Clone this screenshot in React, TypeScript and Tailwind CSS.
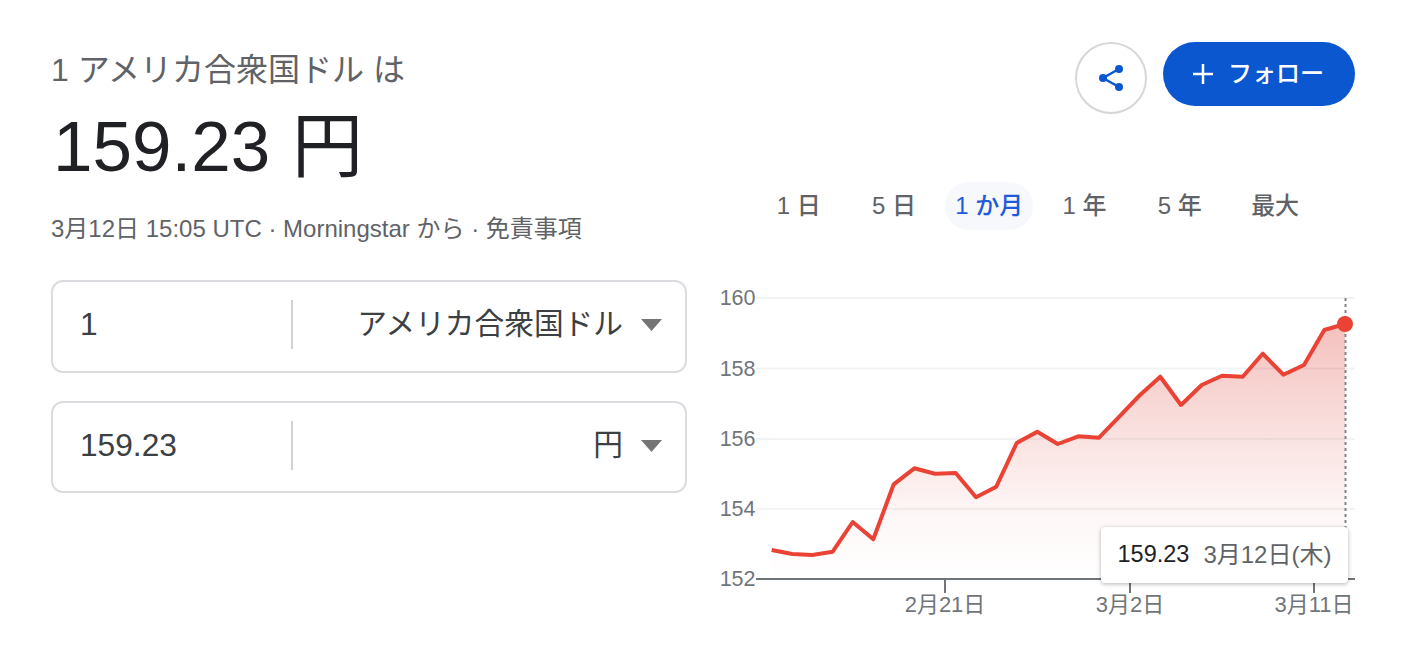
const FONT = "font-['Liberation_Sans','Noto_Sans_CJK_JP',sans-serif]";

const pts = "771.7,550 792.3,554 812.3,555 832.7,551.7 852.7,522 873.3,539.3 893.7,484.3 914.3,468.3 935,473.7 955.7,473 976,497.3 996.3,486.7 1016.7,443 1037.3,431.7 1057.7,444 1078.3,436.3 1099,437.7 1119.3,416.7 1140,395 1160.3,376.7 1181,405 1201.7,385 1222,375.7 1242.7,376.7 1262.7,353.7 1283.3,374.7 1304,365 1324.3,330 1345,324";

function Converter({ value, unit, short }: { value: string; unit: string; short?: boolean }) {
  return (
    <div
      className={
        short
          ? "flex h-[92px] w-[636px] items-center rounded-[12px] border-2 border-[#dadce0] bg-white pb-[3px]"
          : "flex h-[93px] w-[636px] items-center rounded-[12px] border-2 border-[#dadce0] bg-white pb-[4px]"
      }
    >
      <div className="w-[238px] shrink-0 pl-[27px] text-[31.7px] text-[#3c4043]">{value}</div>
      <div className="h-[49px] w-[2px] shrink-0 bg-[#cfd1d4]" />
      <div className="flex flex-1 items-center justify-end pr-[23px]">
        <span className="text-[29.7px] text-[#3c4043]">{unit}</span>
        <svg width="21" height="12" viewBox="0 0 21 12" className="ml-[18px] mt-[2px]">
          <path d="M0 0H21L10.5 12Z" fill="#757575" />
        </svg>
      </div>
    </div>
  );
}

function Tab({ label, active }: { label: string; active?: boolean }) {
  return (
    <div className="flex h-[48px] w-[95.3px] items-center justify-center">
      <span
        className={
          active
            ? "flex h-[48px] w-[88px] items-center justify-center rounded-full bg-[#f6f8fb] text-[24px] font-medium text-[#1f5bd8]"
            : "text-[24px] font-medium text-[#5f6368]"
        }
      >
        {label}
      </span>
    </div>
  );
}

function Chart() {
  const labels = [
    ["160", 298],
    ["158", 368.5],
    ["156", 439],
    ["154", 509],
    ["152", 579],
  ] as const;
  return (
    <div className="relative h-[340px] w-[650px]">
      <svg width="650" height="340" viewBox="712 280 650 340" className="block">
        <defs>
          <linearGradient id="fill" gradientUnits="userSpaceOnUse" x1="0" y1="324" x2="0" y2="579">
            <stop offset="0" stopColor="#d93025" stopOpacity="0.3" />
            <stop offset="0.5" stopColor="#d93025" stopOpacity="0.12" />
            <stop offset="0.75" stopColor="#d93025" stopOpacity="0.04" />
            <stop offset="1" stopColor="#d93025" stopOpacity="0" />
          </linearGradient>
        </defs>
        {[298, 368.5, 439, 509].map((y) => (
          <line key={y} x1="756" x2="1355" y1={y} y2={y} stroke="#f1f3f4" strokeWidth="2" />
        ))}
        <polygon points={`771.7,579 ${pts} 1345,579`} fill="url(#fill)" />
        <line x1="1345.5" x2="1345.5" y1="298" y2="530" stroke="#80868b" strokeWidth="2" strokeDasharray="3 3" />
        <polyline points={pts} fill="none" stroke="#ea4335" strokeWidth="4" strokeLinejoin="round" />
        <circle cx="1345" cy="324" r="8" fill="#ea4335" />
        <line x1="756" x2="1355" y1="579" y2="579" stroke="#70757a" strokeWidth="2" />
        {[945, 1130, 1314].map((x) => (
          <line key={x} x1={x} x2={x} y1="579" y2="593" stroke="#70757a" strokeWidth="2" />
        ))}
        {labels.map(([t, y]) => (
          <text key={t} x="755.5" y={y + 7} textAnchor="end" fontSize="21.5" fill="#70757a">
            {t}
          </text>
        ))}
        <text x="945" y="612" textAnchor="middle" fontSize="22" fill="#70757a">2月21日</text>
        <text x="1130" y="612" textAnchor="middle" fontSize="22" fill="#70757a">3月2日</text>
        <text x="1314" y="612" textAnchor="middle" fontSize="22" fill="#70757a">3月11日</text>
      </svg>
      <div className="absolute left-[389px] top-[247px] flex h-[56px] w-[247px] items-center justify-center gap-[14px] rounded-[4px] bg-white text-[23.5px] shadow-[0_1px_4px_rgba(0,0,0,0.3)]">
        <span className="text-[#202124]">159.23</span>
        <span className="text-[24px] text-[#5f6368]">3月12日(木)</span>
      </div>
    </div>
  );
}

export default function App() {
  return (
    <div className={`flex h-[658px] w-[1402px] overflow-hidden bg-white ${FONT}`}>
      <div className="ml-[51px] flex w-[636px] shrink-0 flex-col">
        <div className="mt-[51px] h-[38px] text-[32px] leading-[38px] text-[#5f6368]">1 アメリカ合衆国ドル は</div>
        <div className="mt-[16px] h-[84px] pl-[2px] text-[71px] leading-[84px] text-[#202124] [word-spacing:2px]">159.23 円</div>
        <div className="mt-[26px] h-[28px] text-[24px] leading-[28px] text-[#5f6368]">3月12日 15:05 UTC · Morningstar から · 免責事項</div>
        <div className="mt-[37px] flex flex-col gap-[28px]">
          <Converter value="1" unit="アメリカ合衆国ドル" />
          <Converter value="159.23" unit="円" short />
        </div>
      </div>
      <div className="flex flex-1 flex-col">
        <div className="mt-[42px] flex justify-end gap-[16px] pr-[47px]">
          <div className="flex h-[72px] w-[72px] items-center justify-center rounded-full border-2 border-[#d5d7d9]">
            <svg width="26" height="28" viewBox="0 0 26 28">
              <path d="M21 5L5 14L21 23" fill="none" stroke="#0b57d0" strokeWidth="2.5" />
              <circle cx="21" cy="5" r="4" fill="#0b57d0" />
              <circle cx="5" cy="14" r="4" fill="#0b57d0" />
              <circle cx="21" cy="23" r="4" fill="#0b57d0" />
            </svg>
          </div>
          <div className="flex h-[64px] w-[192px] items-center rounded-full bg-[#0b57d0] pl-[30px] text-[24px] font-medium text-white">
            <svg width="20" height="20" viewBox="0 0 20 20" className="mr-[15px]">
              <path d="M10 0V20M0 10H20" stroke="#ffffff" strokeWidth="2.5" />
            </svg>
            フォロー
          </div>
        </div>
        <div className="ml-[64px] mt-[68px] flex">
          <Tab label="1 日" />
          <Tab label="5 日" />
          <Tab label="1 か月" active />
          <Tab label="1 年" />
          <Tab label="5 年" />
          <Tab label="最大" />
        </div>
        <div className="ml-[25px] mt-[50px]">
          <Chart />
        </div>
      </div>
    </div>
  );
}
